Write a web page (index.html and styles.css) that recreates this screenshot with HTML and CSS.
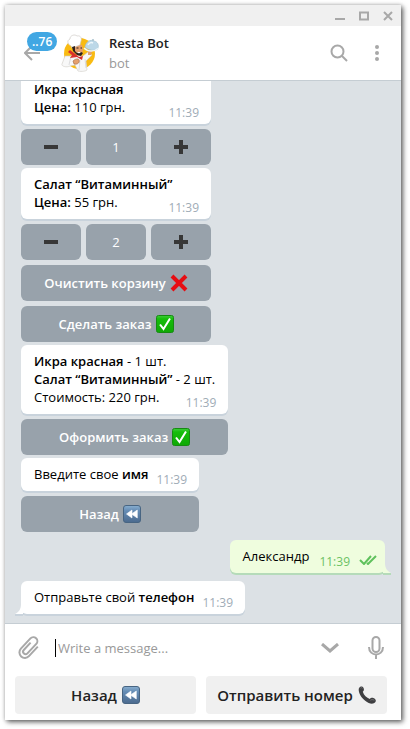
FILE: index.html
```html
<!DOCTYPE html>
<html lang="ru">
<head>
<meta charset="utf-8">
<meta name="viewport" content="width=device-width, initial-scale=1">
<title>Resta Bot</title>
<link rel="stylesheet" href="styles.css">
</head>
<body>
<svg class="defs" aria-hidden="true">
  <defs>
    <linearGradient id="green" x1="0" y1="0" x2="0" y2="1"><stop offset="0" stop-color="#3fce3c"/><stop offset=".2" stop-color="#16bd0b"/><stop offset="1" stop-color="#0fa905"/></linearGradient>
    <linearGradient id="blue" x1="0" y1="0" x2="0" y2="1"><stop offset="0" stop-color="#89afd0"/><stop offset=".3" stop-color="#668db5"/><stop offset="1" stop-color="#4b6a8e"/></linearGradient>
    <symbol id="check" viewBox="0 0 18 18"><rect x=".5" y=".5" width="17" height="17" rx="2" fill="url(#green)" stroke="#168b12"/><path d="M4 9.5 7.5 14 14 3.5" fill="none" stroke="#fff" stroke-width="2"/></symbol>
    <symbol id="rewind" viewBox="0 0 18 18"><rect x=".5" y=".5" width="17" height="17" rx="2.5" fill="url(#blue)" stroke="#486582"/><path d="M9 5v8L3.5 9zM14.3 5v8L8.5 9z" fill="#fff" stroke="#fff" stroke-width=".6"/></symbol>
    <symbol id="cross" viewBox="0 0 18 18"><path d="M2 2 16 16M16 2 2 16" fill="none" stroke="#e60d12" stroke-width="4"/></symbol>
    <symbol id="minus" viewBox="0 0 18 18"><path d="M2 9h14" stroke="#373737" stroke-width="4"/></symbol>
    <symbol id="plus" viewBox="0 0 18 18"><path d="M2 9h14M9 2v14" stroke="#373737" stroke-width="4"/></symbol>
    <symbol id="phone" viewBox="0 0 18 18"><path d="M1 2C2-.2 5-.1 5.6 2c.6 2 .4 3-.8 3.7 1 3.4 3.800 6 7 7.300.8-1.400 2-1.700 3.600-1 2.500 1 3 2.800 1.800 4.300-1.500 2-5.700 2.200-10-1.500C2.700 11.500-.3 5.500 1 2z" fill="#3f3f41"/><path d="M2.300 2.400c.6-1 1.700-1 2.200 0M12.500 14.300c1-.9 2.700-.8 3.800 0" stroke="#77777a" fill="none"/></symbol>
  </defs>
</svg>
<main class="window">
  <div class="titlebar">
    <button type="button" aria-label="Minimize"><svg width="10" height="10" viewBox="0 0 10 10"><path d="M0 8h10"/></svg></button>
    <button type="button" aria-label="Maximize"><svg width="10" height="10" viewBox="0 0 10 10"><path d="M1 1.500h8v7H1z"/></svg></button>
    <button type="button" aria-label="Close"><svg width="10" height="10" viewBox="0 0 10 10"><path d="m1 1 8 8M9 1 1 9"/></svg></button>
  </div>
  <header class="header">
    <button class="back" type="button" aria-label="Back">
      <svg width="16" height="16" viewBox="0 0 16 16"><path d="M16 8H1M8 1 1 8l7 7"/></svg>
      <span class="badge">..76</span>
    </button>
    <svg class="avatar" width="42" height="42" viewBox="0 0 42 42" aria-hidden="true">
      <circle cx="19.500" cy="21.500" r="15.500" fill="#f9bb12"/>
      <path d="m10 24-5 0-3 8c-1 2 4 4 8 2l5-1 3 6c4 1 8 0 9-1l-1-9 6-6-4-3-5 4-9-1z" fill="#f8f8f8" stroke="#cfcbc4" stroke-width=".6"/>
      <path d="m11 24-2 9M25 27l1 9M20 28l-1 10" fill="none" stroke="#d5d5d8" stroke-width=".8"/>
      <path d="M14 13h8l1 5-1 4-3 2-5-4z" fill="#e5a06d"/>
      <path d="M11 14c-4-2-4-6-1-7 0-4 5-5 7-3 4-1 5 3 4 5l-1 4-8 3z" fill="#fff" stroke="#c7c3bd" stroke-width=".6"/>
      <path d="m12 15 3-1v5l2 2 4-1 2 1-2 3-4-1-4-4z" fill="#2c211d"/>
      <path d="M16.500 16h2M20.500 16h1.500" stroke="#2c211d"/>
      <path d="m17 20 4 0-2 1.500z" fill="#fff"/>
      <path d="m8 20 2-2 4 3 5 4 4-1-1 4-5-3-7 1 2-3z" fill="#d8302b"/>
      <path d="M13 29c2-2 5-3 6-1s-1 5-5 4z" fill="#e5a06d" stroke="#9c633f" stroke-width=".6"/>
      <path d="m28 19 4 0-1 4-3 0z" fill="#e5a06d"/>
      <path d="M25 15c1-5 5-8 9-6 4 1 5 4 4 8-3 2-9 2-13-2z" fill="#bcd8e8" stroke="#a1bfce" stroke-width=".6"/>
      <path d="M24 16c4 4 10 4 15 0M28 13c1-2 3-3 5-2" fill="none" stroke="#eef7fb" stroke-width="1.500"/>
      <circle cx="33" cy="8" r="1" fill="#a6c0cd"/>
    </svg>
    <div class="peer"><h1>Resta Bot</h1><p>bot</p></div>
    <button class="search" type="button" aria-label="Search"><svg width="18" height="18" viewBox="0 0 18 18"><circle cx="7.500" cy="7.500" r="6"/><path d="m12 12 5 5"/></svg></button>
    <button class="more" type="button" aria-label="Menu"><svg width="4" height="16" viewBox="0 0 4 16"><circle cx="2" cy="2" r="2"/><circle cx="2" cy="8" r="2"/><circle cx="2" cy="14" r="2"/></svg></button>
  </header>
  <section class="chat" aria-label="Messages">
    <div class="group">
      <article class="bubble">
        <p><b>Икра красная</b></p>
        <div class="last"><p><b>Цена:</b> 110 грн.</p><time>11:39</time></div>
      </article>
      <div class="keys">
        <button type="button" aria-label="Меньше"><svg class="emoji"><use href="#minus"/></svg></button>
        <button class="count" type="button">1</button>
        <button type="button" aria-label="Больше"><svg class="emoji"><use href="#plus"/></svg></button>
      </div>
    </div>
    <div class="group">
      <article class="bubble">
        <p><b>Салат “Витаминный”</b></p>
        <div class="last"><p><b>Цена:</b> 55 грн.</p><time>11:39</time></div>
      </article>
      <div class="keys">
        <button type="button" aria-label="Меньше"><svg class="emoji"><use href="#minus"/></svg></button>
        <button class="count" type="button">2</button>
        <button type="button" aria-label="Больше"><svg class="emoji"><use href="#plus"/></svg></button>
      </div>
      <div class="keys"><button type="button">Очистить корзину <svg class="emoji"><use href="#cross"/></svg></button></div>
      <div class="keys"><button type="button">Сделать заказ <svg class="emoji"><use href="#check"/></svg></button></div>
    </div>
    <div class="group">
      <article class="bubble">
        <p><b>Икра красная</b> - 1 шт.</p>
        <p><b>Салат “Витаминный”</b> - 2 шт.</p>
        <div class="last"><p>Стоимость: 220 грн.</p><time>11:39</time></div>
      </article>
      <div class="keys"><button type="button">Оформить заказ <svg class="emoji"><use href="#check"/></svg></button></div>
    </div>
    <div class="group short">
      <article class="bubble">
        <div class="last"><p>Введите свое <b>имя</b></p><time>11:39</time></div>
      </article>
      <div class="keys"><button type="button">Назад <svg class="emoji"><use href="#rewind"/></svg></button></div>
    </div>
    <div class="group short out">
      <article class="bubble">
        <div class="last"><p>Александр</p><time>11:39</time><svg class="ticks" width="18" height="10" viewBox="0 0 18 10" aria-label="Прочитано"><path d="m1 5 4 4 7-8M8 8l1 1 8-8"/></svg></div>
        <svg class="tail" width="8" height="12" viewBox="0 0 8 12"><path class="shade" d="M0 10h8v2H0z"/><path class="fill" d="M0 0h2c0 5 2 8 6 10H0z"/></svg>
      </article>
    </div>
    <div class="group short">
      <article class="bubble">
        <div class="last"><p>Отправьте свой <b>телефон</b></p><time>11:39</time></div>
        <svg class="tail" width="8" height="12" viewBox="0 0 8 12"><path class="shade" d="M0 10h8v2H0z"/><path class="fill" d="M8 0H6c0 5-2 8-6 10h8z"/></svg>
      </article>
    </div>
  </section>
  <form class="compose">
    <button class="attach" type="button" aria-label="Attach"><svg width="22" height="24" viewBox="0 0 22 24"><path transform="rotate(43 11 12)" d="M16.500 5v13a5.500 5.500 0 0 1-11 0V4a4 4 0 0 1 8 0v13a2.500 2.500 0 0 1-5 0V7"/></svg></button>
    <span class="caret"></span>
    <input type="text" placeholder="Write a message..." aria-label="Write a message">
    <button class="toggle" type="button" aria-label="Hide keyboard"><svg width="18" height="10" viewBox="0 0 18 10"><path d="m1 1 8 7 8-7"/></svg></button>
    <button class="mic" type="button" aria-label="Record voice"><svg width="16" height="23" viewBox="0 0 16 23"><rect x="4.500" y="1" width="7" height="15" rx="3.500"/><path d="M1 11c0 10 14 10 14 0M8 18.500V23"/></svg></button>
  </form>
  <div class="replies">
    <button type="button">Назад <svg class="emoji"><use href="#rewind"/></svg></button>
    <button type="button">Отправить номер <svg class="emoji"><use href="#phone"/></svg></button>
  </div>
</main>
</body>
</html>
```
FILE: styles.css
```css
* { box-sizing: border-box; margin: 0; padding: 0; }
body { height: 100vh; padding: 5px 9px 9px 5px; background: #fff; font: 13px/18px "Open Sans", sans-serif; color: #000; }
button { border: 0; background: none; font: inherit; color: inherit; cursor: pointer; }
svg { display: block; flex: none; fill: none; }
b { font-weight: 600; }
.defs { position: absolute; width: 0; height: 0; }
.window { display: flex; flex-direction: column; height: 100%; background: #fff; box-shadow: 2px 2px 5px rgba(0, 0, 0, .6), 0 0 4px rgba(0, 0, 0, .2); }

.titlebar { display: flex; justify-content: flex-end; align-items: center; gap: 14px; flex: none; height: 21px; padding-right: 8px; background: #f0f0f0; }
.titlebar svg { stroke: #a8a8a8; stroke-width: 2; }

.header { display: flex; align-items: center; flex: none; height: 54px; padding: 0 22px 0 19px; }
.header button { stroke: #a8a8a8; stroke-width: 2; }
.back { position: relative; margin-right: 20px; }
.badge { position: absolute; left: 3px; bottom: 10px; padding: 0 5px; border-radius: 10px; background: #41a7e3; color: #fff; font-size: 12px; line-height: 19px; font-weight: 600; }
.peer { flex: 1; margin-left: 7px; }
.peer h1 { font-size: 13px; line-height: 20px; font-weight: 600; color: #222; }
.peer p { line-height: 20px; color: #999; }
.search { margin-right: 27px; }
.more svg { fill: #a8a8a8; stroke: none; }

.chat { display: flex; flex-direction: column; justify-content: flex-end; align-items: flex-start; gap: 3px; flex: 1; min-height: 0; overflow: hidden; padding: 0 16px 9px; border-top: 1px solid #c5cdd3; border-bottom: 1px solid #c5cdd3; background: #dce1e5; }
.group { display: flex; flex-direction: column; gap: 5px; flex: none; min-width: 190px; }
.group.short { min-width: 0; }
.group.out { align-self: flex-end; margin: 5px 0; }
.bubble { position: relative; padding: 7px 13px 8px; border-radius: 6px; background: #fff; box-shadow: 0 2px 0 #c9d3dc; white-space: nowrap; }
.last { display: flex; align-items: flex-end; justify-content: space-between; gap: 8px; }
time { margin: 0 -1px -6px 0; font-size: 12px; color: #a0acb6; }
.tail { position: absolute; left: -6px; bottom: -2px; }
.tail .fill { fill: #fff; }
.tail .shade { fill: #c9d3dc; }
.out .bubble { padding-right: 8px; background: #effdde; box-shadow: 0 2px 0 #b5dbb9; }
.out .last { gap: 10px; }
.out time { color: #6cc264; }
.out .tail { left: auto; right: -6px; }
.out .tail .fill { fill: #effdde; }
.out .tail .shade { fill: #b5dbb9; }
.ticks { stroke: #5fc15c; stroke-width: 2; }
.keys { display: flex; gap: 5px; }
.keys button { display: flex; flex: 1; align-items: center; justify-content: center; gap: 4px; height: 36px; border-radius: 6px; background: #98a2ab; color: #fff; font-weight: 600; }
.keys .count { font-weight: 400; }
.emoji { width: 18px; height: 18px; }

.compose { display: flex; align-items: center; flex: none; height: 47px; padding: 0 17px 0 13px; }
.compose svg { stroke: #a8a8a8; stroke-width: 2; }
.caret { width: 1px; height: 18px; margin: 0 2px 0 15px; background: #000; }
.compose input { flex: 1; min-width: 0; border: 0; outline: 0; background: none; font: inherit; }
.compose input::placeholder { color: #999; opacity: 1; }
.toggle { margin-right: 29px; }
.toggle svg { stroke-width: 3; }
.replies { display: flex; gap: 10px; flex: none; padding: 5px 14px 6px 10px; }
.replies button { display: flex; flex: 1 1 0; align-items: center; justify-content: center; gap: 5px; height: 38px; border-radius: 4px; background: #f0f0f0; color: #222; font-size: 15px; font-weight: 600; white-space: nowrap; }
```
